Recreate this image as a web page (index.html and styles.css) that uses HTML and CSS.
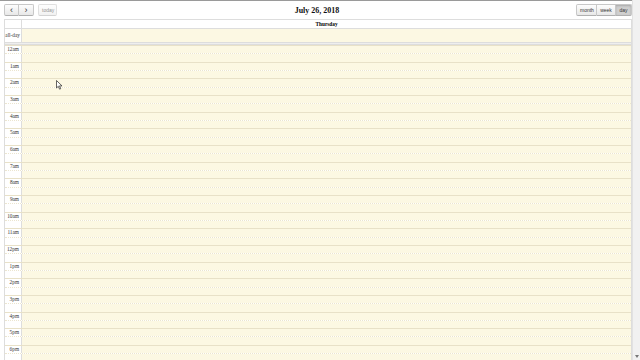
FILE: index.html
```html
<!DOCTYPE html>
<html>
<head>
<meta charset="utf-8">
<link rel="stylesheet" href="styles.css">
</head>
<body>
<div class="topline"></div>
<div class="page">
  <div class="toolbar">
    <div class="left">
      <div class="group">
        <button class="btn arrow">&lsaquo;</button><button class="btn arrow">&rsaquo;</button>
      </div>
      <button class="btn today">today</button>
    </div>
    <h2 class="title">July 26, 2018</h2>
    <div class="right">
      <div class="group">
        <button class="btn">month</button><button class="btn">week</button><button class="btn active">day</button>
      </div>
    </div>
  </div>
  <div class="cal">
    <div class="head"><div class="axis"></div><div class="dayname">Thursday</div></div>
    <div class="allday"><div class="axis label">all-day</div><div class="today-cell"></div></div>
    <div class="divider"></div>
    <div class="scroller"><div class="slots" id="slots"></div></div>
  </div>
</div>
<div class="scrollbar"><div class="sb-arrow"></div></div>
<svg class="cursor" width="7" height="10" viewBox="0 0 7 10"><path d="M0.5 0.5 L0.5 8 L2.3 6.3 L3.6 9.2 L4.7 8.7 L3.5 5.9 L6 5.9 Z" fill="#fff" stroke="#222" stroke-width="0.7"/></svg>
<script>
  var labels = ["12am","1am","2am","3am","4am","5am","6am","7am","8am","9am","10am","11am","12pm","1pm","2pm","3pm","4pm","5pm","6pm","7pm","8pm","9pm","10pm","11pm"];
  var s = document.getElementById('slots'), h = '';
  for (var i = 0; i < 48; i++) {
    var hour = i % 2 === 0;
    h += '<div class="slot ' + (hour ? 'hour' : 'half') + '"><div class="axis label">' + (hour ? labels[i/2] : '') + '</div><div class="today-cell"></div></div>';
  }
  s.innerHTML = h;
</script>
</body>
</html>
```

FILE: styles.css
```css
html, body { margin: 0; padding: 0; background: #fff; overflow: hidden; height: 360px; }
body { font-family: "Liberation Serif", "Times New Roman", serif; color: #000; position: relative; }
.topline { height: 1px; background: #9a9a9a; margin-right: 8px; }
.page { margin: 0 8px 0 4px; height: 359px; display: flex; flex-direction: column; }
.toolbar { display: grid; grid-template-columns: 1fr auto 1fr; align-items: center; height: 17px; padding-top: 1px; box-sizing: border-box; flex: none; }
.left { display: flex; gap: 4px; align-items: center; }
.right { display: flex; justify-content: flex-end; }
.group { display: flex; }
.btn { font-family: "Liberation Sans", Arial, sans-serif; font-size: 5px; height: 12px; padding: 0 3px; margin: 0; border: 1px solid #c8c8c8; border-bottom-color: #b0b0b0; background: linear-gradient(#fdfdfd, #e8e8e8); color: #333; border-radius: 0; line-height: 10px; box-sizing: border-box; }
.group .btn:first-child { border-radius: 2px 0 0 2px; }
.group .btn:last-child { border-radius: 0 2px 2px 0; }
.group .btn + .btn { border-left: none; }
.btn.arrow { width: 15px; font-size: 9px; line-height: 9px; color: #333; }
.btn.today { width: 19px; opacity: .55; border-radius: 2px; }
.right .btn:nth-child(1) { width: 21px; }
.right .btn:nth-child(2) { width: 19px; }
.right .btn:nth-child(3) { width: 16px; }
.btn.active { background: #cfcfcf; box-shadow: inset 0 1px 2px rgba(0,0,0,.18); color: #333; }
.title { margin: 0; font-size: 8px; font-weight: bold; color: #111; position: relative; left: -1px; }
.cal { border: 1px solid #ddd; border-bottom: 0; margin-top: 1px; flex: 1; min-height: 0; display: flex; flex-direction: column; }
.head, .allday, .slot { display: grid; grid-template-columns: 17px 1fr; }
.axis { border-right: 1px solid #ddd; }
.head { height: 8px; border-bottom: 1px solid #ddd; flex: none; }
.dayname { font-size: 5.3px; font-weight: bold; text-align: center; line-height: 8px; }
.allday { height: 13px; flex: none; }
.label { font-size: 5.3px; text-align: right; padding-right: 2px; white-space: nowrap; color: #333; }
.allday .label { line-height: 13px; padding-right: 1px; }
.today-cell { background: #fcf8e3; }
.divider { height: 1px; background: #eee; border-top: 1px solid #ddd; border-bottom: 1px solid #ddd; flex: none; }
.scroller { flex: 1; min-height: 0; overflow: hidden; }
.slot { height: 8.33px; box-sizing: border-box; }
.slot.half { border-top: 1px dotted #ebe5cf; }
.slot.hour { border-top: 1px solid #e8e1c8; }
.slot .label { line-height: 7px; }
.scrollbar { position: absolute; right: 0; top: 0; width: 8px; height: 360px; background: #f1f1f1; border-left: 1px solid #e2e2e2; box-sizing: border-box; }
.sb-arrow { position: absolute; bottom: 2px; left: 2px; width: 0; height: 0; border-left: 2px solid transparent; border-right: 2px solid transparent; border-top: 3px solid #777; }
.cursor { position: absolute; left: 56px; top: 80px; }
```
